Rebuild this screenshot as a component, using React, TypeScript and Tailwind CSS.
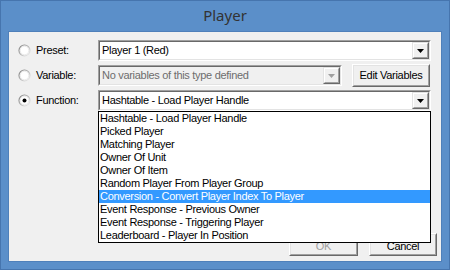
import React from "react";

const font = { fontFamily: '"Liberation Sans", Arial, sans-serif' };

function Arrow({ disabled }: { disabled?: boolean }) {
  return (
    <div className="h-full w-[17px] border border-t-[#e3e3e3] border-l-[#e3e3e3] border-r-[#696969] border-b-[#696969] bg-[#f0f0f0]">
      <div className="flex h-full w-full items-center justify-center border border-t-white border-l-white border-r-[#a0a0a0] border-b-[#a0a0a0]">
        <svg width="7" height="4" viewBox="0 0 7 4">
          <polygon points="0,0 7,0 3.5,4" fill={disabled ? "#a0a0a0" : "#000"} />
        </svg>
      </div>
    </div>
  );
}

function Combo({ text, disabled, w }: { text: string; disabled?: boolean; w: string }) {
  return (
    <div className={`${w} h-[21px] border border-t-[#a0a0a0] border-l-[#a0a0a0] border-r-white border-b-white`}>
      <div className={`flex h-full w-full border border-t-[#696969] border-l-[#696969] border-r-[#e3e3e3] border-b-[#e3e3e3] ${disabled ? "bg-[#f0f0f0]" : "bg-white"}`}>
        <div className={`flex-1 truncate pl-[2px] text-[11px] leading-[17px] tracking-[-0.3px] ${disabled ? "text-[#6d6d6d]" : "text-black"}`}>
          {text}
        </div>
        <Arrow disabled={disabled} />
      </div>
    </div>
  );
}

function Radio({ checked }: { checked?: boolean }) {
  return (
    <svg width="13" height="13" viewBox="0 0 13 13">
      <defs>
        <linearGradient id={checked ? "g1" : "g0"} x1="0" y1="0" x2="1" y2="1">
          <stop offset="0" stopColor="#7a7a7a" />
          <stop offset="1" stopColor="#f4f4f4" />
        </linearGradient>
      </defs>
      <circle cx="6.5" cy="6.5" r="5.5" fill="#fff" stroke={`url(#${checked ? "g1" : "g0"})`} strokeWidth="1.2" />
      <circle cx="6.5" cy="6.5" r="4.3" fill="none" stroke="#dcdcdc" strokeWidth="0.6" />
      {checked && <circle cx="6.5" cy="6.5" r="2" fill="#000" />}
    </svg>
  );
}

function Button({ label, disabled, w, low }: { label: string; disabled?: boolean; w: string; low?: boolean }) {
  return (
    <div className={`${w} h-[23px] border border-t-white border-l-white border-r-[#696969] border-b-[#696969] bg-[#f0f0f0]`}>
      <div className={`flex h-full w-full justify-center border border-t-[#e3e3e3] border-l-[#e3e3e3] border-r-[#a0a0a0] border-b-[#a0a0a0] text-[11px] tracking-[-0.3px] ${low ? "items-end leading-[13px] pb-[1px]" : "items-center"} ${disabled ? "text-[#a0a0a0]" : "text-black"}`}>
        {label}
      </div>
    </div>
  );
}

const items = [
  "Hashtable - Load Player Handle",
  "Picked Player",
  "Matching Player",
  "Owner Of Unit",
  "Owner Of Item",
  "Random Player From Player Group",
  "Conversion - Convert Player Index To Player",
  "Event Response - Previous Owner",
  "Event Response - Triggering Player",
  "Leaderboard - Player In Position",
];

export default function App() {
  return (
    <div className="flex h-[270px] w-[450px] flex-col border border-[#4675ae] bg-[#5b8fc9] px-[7px] pb-[7px]" style={font}>
      <div className="flex h-[30px] items-center justify-center pb-[1px] text-[15px] text-[#333333]" style={{ fontFamily: '"Noto Sans", "Open Sans", sans-serif' }}>
        Player
      </div>
      <div className="relative flex flex-1 flex-col border border-[#4f80ba] bg-[#f0f0f0]">
        <div className="flex flex-col gap-[4px] pt-[8px]">
          <div className="flex h-[21px] items-center">
            <div className="ml-[9px] flex"><Radio /></div>
            <div className="ml-[5px] w-[62px] text-[11px] tracking-[-0.3px] text-black">Preset:</div>
            <Combo text="Player 1 (Red)" w="w-[333px]" />
          </div>
          <div className="flex h-[21px] items-center">
            <div className="ml-[9px] flex"><Radio /></div>
            <div className="ml-[5px] w-[62px] text-[11px] tracking-[-0.3px] text-black">Variable:</div>
            <Combo text="No variables of this type defined" disabled w="w-[244px]" />
            <div className="ml-[10px]"><Button label="Edit Variables" w="w-[78px]" /></div>
          </div>
          <div className="flex h-[21px] items-center">
            <div className="ml-[9px] flex"><Radio checked /></div>
            <div className="ml-[5px] w-[62px] text-[11px] tracking-[-0.3px] text-black">Function:</div>
            <Combo text="Hashtable - Load Player Handle" w="w-[333px]" />
          </div>
        </div>
        <div className="mt-auto flex justify-end gap-[11px] pb-[5px] pr-[4px]">
          <Button label="OK" disabled low w="w-[69px]" />
          <Button label="Cancel" low w="w-[68px]" />
        </div>
        <div className="absolute left-[89px] top-[79px] w-[333px] border border-black bg-white">
          {items.map((t, i) => (
            <div
              key={t}
              className={`h-[13px] pl-[1px] text-[11px] leading-[13px] tracking-[-0.3px] whitespace-nowrap ${i === 6 ? "bg-[#3399ff] text-white" : "text-black"}`}
            >
              {t}
            </div>
          ))}
        </div>
      </div>
    </div>
  );
}
